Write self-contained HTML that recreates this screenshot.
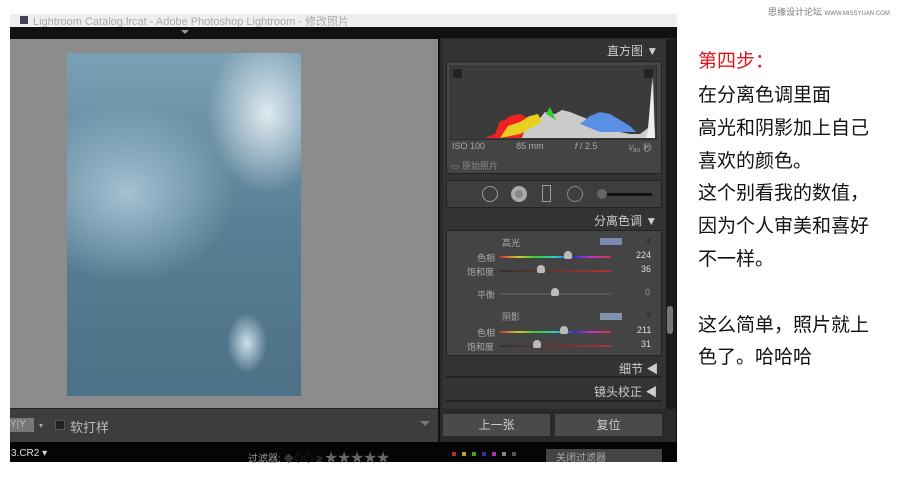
<!DOCTYPE html>
<html><head><meta charset="utf-8"><style>
*{margin:0;padding:0;box-sizing:border-box}
body{width:900px;height:488px;background:#fff;position:relative;overflow:hidden;font-family:"Liberation Sans","Noto Sans CJK SC",sans-serif}
.a{position:absolute}
.lbl{color:#aaa;font-size:9px}
.tx{position:absolute;left:698px;font-size:19px;color:#111;line-height:33px;font-family:"Liberation Sans","Noto Sans CJK SC",sans-serif}
</style></head><body>
<div class="a" style="left:768px;top:5px;font-size:9px;color:#777">思缘设计论坛 <span style="font-size:6px">WWW.MISSYUAN.COM</span></div>
<div class="a" style="left:10px;top:14px;width:667px;height:13px;background:#eee"></div>
<div class="a" style="left:20px;top:16px;width:8px;height:8px;background:#445"></div>
<div class="a" style="left:33px;top:13px;font-size:11px;color:#aaa">Lightroom Catalog.lrcat - Adobe Photoshop Lightroom - 修改照片</div>
<div class="a" style="left:10px;top:27px;width:667px;height:435px;background:#111"></div>
<div class="a" style="left:181px;top:30px;width:0;height:0;border-left:4px solid transparent;border-right:4px solid transparent;border-top:4px solid #999"></div>
<div class="a" style="left:10px;top:39px;width:428px;height:369px;background:#8c8c8c"></div>
<div class="a" style="left:67px;top:53px;width:234px;height:343px;background:radial-gradient(ellipse 60px 80px at 200px 60px,#dfeaf0,rgba(200,220,230,0) 100%),radial-gradient(ellipse 20px 30px at 180px 290px,#cde0ea,rgba(0,0,0,0)),radial-gradient(ellipse 110px 90px at 60px 140px,#a3c2d3,rgba(0,0,0,0)),linear-gradient(180deg,#7aa0b5 0%,#587f95 50%,#4d7186 100%)"></div>
<div class="a" style="left:10px;top:408px;width:428px;height:34px;background:#3d3d3d;border-top:1px solid #222"></div>
<div class="a" style="left:10px;top:418px;width:24px;height:14px;background:#777;color:#bbb;font-size:10px;line-height:14px">Y|Y</div>
<div class="a" style="left:39px;top:421px;color:#aaa;font-size:8px">▾</div>
<div class="a" style="left:55px;top:420px;width:10px;height:10px;background:#222;border:1px solid #555"></div>
<div class="a" style="left:70px;top:417px;color:#bbb;font-size:13px">软打样</div>
<div class="a" style="left:420px;top:421px;width:0;height:0;border-left:5px solid transparent;border-right:5px solid transparent;border-top:5px solid #777"></div>
<div class="a" style="left:10px;top:442px;width:667px;height:20px;background:#050505"></div>
<div class="a" style="left:11px;top:448px;color:#ddd;font-size:10px">3.CR2 ▾</div>
<div class="a" style="left:248px;top:447px;color:#999;font-size:10px">过滤器: <span style="color:#333">◆◇◇</span> <span style="color:#555">≥</span> <span style="color:#666;font-size:13px">★★★★★</span></div>
<div class="a" style="left:452px;top:452px;display:flex;gap:6px"><i style="width:4px;height:4px;background:#a33"></i><i style="width:4px;height:4px;background:#aa3"></i><i style="width:4px;height:4px;background:#3a3"></i><i style="width:4px;height:4px;background:#33a"></i><i style="width:4px;height:4px;background:#a3a"></i><i style="width:4px;height:4px;background:#888"></i><i style="width:4px;height:4px;background:#555"></i></div>
<div class="a" style="left:546px;top:449px;width:116px;height:13px;background:#444;color:#aaa;font-size:10px;padding-left:10px">关闭过滤器</div>
<div class="a" style="left:440px;top:38px;width:236px;height:404px;background:#2a2a2a"></div>
<div class="a" style="left:443px;top:39px;width:223px;height:370px;background:#333"></div>
<div class="a" style="left:666px;top:39px;width:10px;height:370px;background:#1c1c1c"></div>
<div class="a" style="left:667px;top:306px;width:6px;height:28px;background:#777;border-radius:3px"></div>
<div class="a" style="left:607px;top:42px;color:#ccc;font-size:12px">直方图 ▼</div>
<div class="a" style="left:446px;top:61px;width:216px;height:113px;background:#444;border:1px solid #222"></div>
<svg class="a" style="left:450px;top:66px" width="207" height="74" viewBox="0 0 207 74">
<rect width="207" height="74" fill="#3b3b3b" stroke="#222"/>
<rect x="3" y="3" width="9" height="9" fill="#222"/><rect x="194" y="3" width="9" height="9" fill="#222"/>
<polygon points="50,72 55,62 62,58 70,54 80,50 90,52 95,46 105,48 112,44 120,46 130,50 140,54 150,58 160,62 170,66 180,68 190,68 198,62 203,10 205,72" fill="#ccc"/>
<polygon points="35,72 45,68 50,55 55,54 60,50 70,48 78,52 72,72" fill="#e22"/>
<polygon points="50,72 58,60 70,56 80,50 88,48 92,56 70,68" fill="#e8d020"/>
<polygon points="96,48 100,41 106,54" fill="#3c3"/>
<polygon points="130,58 140,50 150,46 160,48 170,54 180,60 186,66 150,66" fill="#5b8fe6"/>
<polygon points="198,64 202,15 205,72 196,72" fill="#eee"/>
</svg>
<div class="a" style="left:452px;top:141px;color:#aaa;font-size:9px;width:200px;display:flex;justify-content:space-between"><span>ISO 100</span><span>85 mm</span><span><i>f</i> / 2.5</span><span>¹⁄₈₀ 秒</span></div>
<div class="a" style="left:451px;top:159px;color:#888;font-size:9px">▭ 原始照片</div>
<div class="a" style="left:446px;top:180px;width:216px;height:28px;background:#3e3e3e;border:1px solid #222"></div>
<div class="a" style="left:482px;top:186px;width:16px;height:16px;border:1px solid #999;border-radius:50%"></div>
<div class="a" style="left:511px;top:186px;width:16px;height:16px;background:#888;border-radius:50%;border:4px solid #aaa"></div>
<div class="a" style="left:542px;top:185px;width:9px;height:17px;border:1px solid #999"></div>
<div class="a" style="left:567px;top:186px;width:16px;height:16px;border:1px solid #888;border-radius:50%"></div>
<div class="a" style="left:600px;top:193px;width:52px;height:3px;background:#111"></div>
<div class="a" style="left:597px;top:189px;width:10px;height:10px;border-radius:50%;background:#666"></div>
<div class="a" style="left:594px;top:212px;color:#ccc;font-size:12px">分离色调 ▼</div>
<div class="a" style="left:446px;top:230px;width:216px;height:126px;background:#444;border:1px solid #222"></div>
<div class="a lbl" style="left:502px;top:236px">高光</div>
<div class="a" style="left:600px;top:238px;width:22px;height:7px;background:#7c88b0"></div>
<div class="a lbl" style="left:644px;top:236px;color:#333">▼</div>
<div class="a lbl" style="left:477px;top:251px">色相</div>
<div class="a" style="left:500px;top:256px;width:111px;height:2px;background:linear-gradient(90deg,#c33,#cc3,#3c3,#3cc,#33c,#c3c,#c33)"></div>
<div class="a" style="left:564px;top:251px;width:8px;height:8px;background:#bbb;border-radius:50% 50% 2px 2px"></div>
<div class="a" style="left:636px;top:250px;color:#ddd;font-size:9px">224</div>
<div class="a lbl" style="left:467px;top:265px">饱和度</div>
<div class="a" style="left:500px;top:270px;width:111px;height:2px;background:linear-gradient(90deg,#333,#a33)"></div>
<div class="a" style="left:537px;top:265px;width:8px;height:8px;background:#bbb;border-radius:50% 50% 2px 2px"></div>
<div class="a" style="left:641px;top:264px;color:#ddd;font-size:9px">36</div>
<div class="a lbl" style="left:477px;top:288px">平衡</div>
<div class="a" style="left:500px;top:293px;width:111px;height:2px;background:#555"></div>
<div class="a" style="left:551px;top:288px;width:8px;height:8px;background:#bbb;border-radius:50% 50% 2px 2px"></div>
<div class="a" style="left:645px;top:287px;color:#999;font-size:9px">0</div>
<div class="a lbl" style="left:502px;top:310px">阴影</div>
<div class="a" style="left:600px;top:313px;width:22px;height:7px;background:#7f93b0"></div>
<div class="a lbl" style="left:644px;top:310px;color:#333">▼</div>
<div class="a lbl" style="left:477px;top:326px">色相</div>
<div class="a" style="left:500px;top:331px;width:111px;height:2px;background:linear-gradient(90deg,#c33,#cc3,#3c3,#3cc,#33c,#c3c,#c33)"></div>
<div class="a" style="left:560px;top:326px;width:8px;height:8px;background:#bbb;border-radius:50% 50% 2px 2px"></div>
<div class="a" style="left:637px;top:325px;color:#ddd;font-size:9px">211</div>
<div class="a lbl" style="left:467px;top:340px">饱和度</div>
<div class="a" style="left:500px;top:345px;width:111px;height:2px;background:linear-gradient(90deg,#333,#a33)"></div>
<div class="a" style="left:533px;top:340px;width:8px;height:8px;background:#bbb;border-radius:50% 50% 2px 2px"></div>
<div class="a" style="left:641px;top:339px;color:#ddd;font-size:9px">31</div>
<div class="a" style="left:446px;top:376px;width:216px;height:2px;background:#222"></div>
<div class="a" style="left:619px;top:360px;color:#ccc;font-size:12px">细节 ◀</div>
<div class="a" style="left:446px;top:400px;width:216px;height:2px;background:#222"></div>
<div class="a" style="left:594px;top:383px;color:#ccc;font-size:12px">镜头校正 ◀</div>
<div class="a" style="left:443px;top:414px;width:107px;height:22px;background:#4a4a4a;color:#ccc;font-size:12px;text-align:center;line-height:22px">上一张</div>
<div class="a" style="left:555px;top:414px;width:107px;height:22px;background:#4a4a4a;color:#ccc;font-size:12px;text-align:center;line-height:22px">复位</div>
<div class="tx" style="top:45px;color:#e0141e">第四步：</div>
<div class="tx" style="top:79px">在分离色调里面</div>
<div class="tx" style="top:112px">高光和阴影加上自己</div>
<div class="tx" style="top:145px">喜欢的颜色。</div>
<div class="tx" style="top:177px">这个别看我的数值，</div>
<div class="tx" style="top:210px">因为个人审美和喜好</div>
<div class="tx" style="top:243px">不一样。</div>
<div class="tx" style="top:309px">这么简单，照片就上</div>
<div class="tx" style="top:341px">色了。哈哈哈</div>
</body></html>
